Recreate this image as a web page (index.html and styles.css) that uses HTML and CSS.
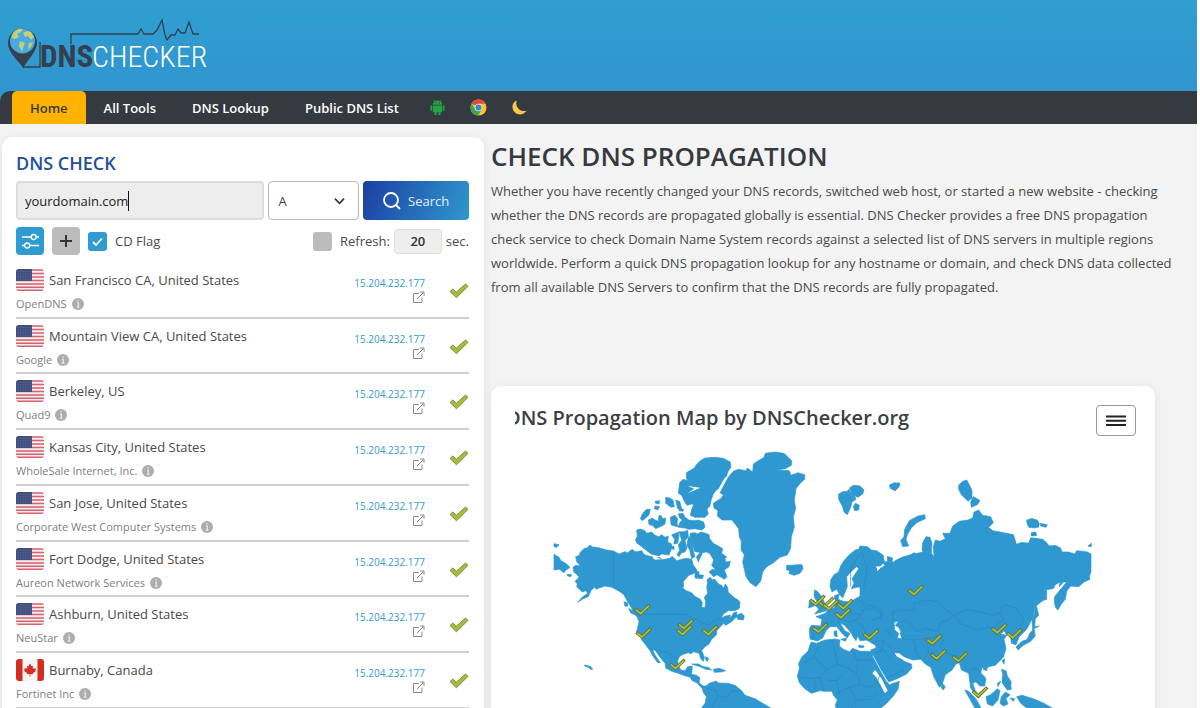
FILE: index.html
```html
<!DOCTYPE html>
<html lang="en">
<head>
<meta charset="utf-8">
<title>DNS Checker - DNS Check Propagation Tool</title>
<link rel="stylesheet" href="styles.css">
</head>
<body>
<svg class="defs" aria-hidden="true">
  <symbol id="us" viewBox="0 0 28 22">
    <rect width="28" height="22" fill="#f3eef0"/>
    <path d="M0 1H28M0 4.5H28M0 8H28M0 11.5H28M0 15H28M0 18.2H28M0 21.3H28" stroke="#d9606c" stroke-width="1.6"/>
    <rect width="16" height="12" fill="#41507f"/>
    <path d="M1.500 2.500H15M1.500 5H15M1.500 7.500H15M1.500 10H15" stroke="#6d79a3" stroke-width=".7" stroke-dasharray="1 1.500"/>
  </symbol>
  <symbol id="ca" viewBox="0 0 28 22">
    <rect width="28" height="22" fill="#f8f5f4"/>
    <path d="M0 0H6.500V22H0ZM21.500 0H28V22H21.500Z" fill="#d62b1f"/>
    <path d="M14 4.500L15.600 7.300L17 6.700L16.600 10L18 8.800L18.500 9.800L20 9.600L19.300 11.300L20 11.900L16.800 14.200L17 15.300L14.400 15V17.500H13.600V15L11 15.300L11.200 14.200L8 11.900L8.700 11.300L8 9.600L9.500 9.800L10 8.800L11.400 10L11 6.700L12.400 7.300Z" fill="#d62b1f"/>
  </symbol>
  <symbol id="info" viewBox="0 0 12 12">
    <circle cx="6" cy="6" r="6" fill="#adadad"/>
    <path d="M6 2.200V3.600M5 5H6.300V9M4.800 9.200H7.400" stroke="#eee" stroke-width="1.200" fill="none"/>
  </symbol>
  <symbol id="ext" viewBox="0 0 13 13">
    <path d="M7 2.500H1.500V11.500H10V6.500M5 8L11.500 1.500M8.200 1H12V4.800" fill="none" stroke="#8a8a8a" stroke-width="1"/>
  </symbol>
  <symbol id="ok" viewBox="0 0 20 16">
    <path d="M1 8.500L3.800 6L7.300 9.200L16.500 1L19 3.300L7.500 14.800Z" fill="#9fbf3b" stroke="#7c8f45" stroke-width="1" stroke-linejoin="round"/>
  </symbol>
  <g id="pin">
    <path d="M-17 -15L0 -1L27 -27" fill="none" stroke="#66702f" stroke-width="10"/>
    <path d="M-15 -13L0 -1L25 -25" fill="none" stroke="#abc53a" stroke-width="5"/>
  </g>
</svg>

<header class="top">
  <a class="logo" href="#" aria-label="DNS Checker">
    <svg viewBox="0 0 204 56" role="img">
      <path d="M1 27A14.500 14.500 0 0 1 30 27C30 35 20 45 16 52C12 45 1 37 1 27Z" fill="#34404d"/>
      <circle cx="15.500" cy="25" r="12.500" fill="#49abe0"/>
      <path d="M5 19C8 13 13 12 16 13L14 16L10 18L12 21L8 23L5 22ZM16 17L20 15L24 16L27 21L24 24L21 20L18 21ZM13 25L18 27L16 32L15 36L12 30ZM22 27L26 26L24 31L21 33Z" fill="#c6cf72"/>
      <path d="M16 51H33V26M64 28V18H131L134 13L137 18H146L150 14L155 4L158 19L160 24L164 19H168L171 13L174 17H178L182 6L186 18H192" fill="none" stroke="#34404d" stroke-width="1.300"/>
      <text class="logo-dns" x="33" y="51">DNS</text>
      <text class="logo-checker" x="85" y="51">CHECKER</text>
    </svg>
  </a>
</header>

<nav class="nav">
  <a class="active" href="#">Home</a>
  <a href="#">All Tools</a>
  <a href="#">DNS Lookup</a>
  <a href="#">Public DNS List</a>
  <a class="ico" href="#" aria-label="Android app"><svg viewBox="0 0 18 18"><path d="M4 6A5 4.500 0 0 1 14 6ZM4 7H14V14H12.200V17H10V14H8V17H5.800V14H4ZM1.500 7H3.300V12.500H1.500ZM14.700 7H16.500V12.500H14.700Z" fill="#24a344"/><path d="M5 1L6.500 3M13 1L11.500 3" stroke="#24a344"/><path d="M6.500 4H7.500M10.500 4H11.500" stroke="#343a40"/></svg></a>
  <a class="ico" href="#" aria-label="Chrome extension"><svg viewBox="0 0 18 18"><circle cx="9" cy="9" r="8.500" fill="#fbc52d"/><path d="M9 9L1.600 4.700A8.500 8.500 0 0 1 16.400 5H9Z" fill="#e34b35"/><path d="M1.600 4.700A8.500 8.500 0 0 0 8.600 17.500L12.500 11L9 9L5.500 11Z" fill="#3aa556"/><circle cx="9" cy="9" r="4" fill="#f2e9d8"/><circle cx="9" cy="9" r="3.200" fill="#3486dc"/></svg></a>
  <a class="ico" href="#" aria-label="Dark mode"><svg viewBox="0 0 18 18"><path d="M6 1.500C4 8 9 14 16.500 12.500C13 17.500 7 17.500 3.500 13.500C0 9 1.500 3.500 6 1.500Z" fill="#fcca46"/></svg></a>
</nav>

<main class="main">
  <section class="card check">
    <h2 class="check-title">DNS CHECK</h2>
    <form class="search">
      <div class="field"><input type="text" aria-label="Domain" value="yourdomain.com"><span class="sizer" aria-hidden="true">yourdomain.com</span></div>
      <select aria-label="Record type"><option>A</option></select>
      <button class="go" type="button"><svg viewBox="0 0 18 18"><circle cx="8" cy="8" r="7" fill="none" stroke="#fff" stroke-width="1.800"/><path d="M13 13L17 17" stroke="#fff" stroke-width="1.800"/></svg>Search</button>
    </form>
    <div class="options">
      <button class="sq blue" type="button" aria-label="Settings"><svg viewBox="0 0 28 28"><path d="M6 10H15M20.500 10H23M6 18.500H8.500M14 18.500H23" stroke="#fff" stroke-width="1.300"/><circle cx="17.700" cy="10" r="2.500" fill="none" stroke="#fff" stroke-width="1.300"/><circle cx="11.200" cy="18.500" r="2.500" fill="none" stroke="#fff" stroke-width="1.300"/></svg></button>
      <button class="sq grey" type="button" aria-label="Add server"><svg viewBox="0 0 28 28"><path d="M8 14H20M14 8V20" stroke="#333" stroke-width="2"/></svg></button>
      <label class="tick cd"><input type="checkbox" checked>CD Flag</label>
      <label class="tick refresh"><input type="checkbox">Refresh:</label>
      <input class="secs" type="text" aria-label="Refresh seconds" value="20">
      <span>sec.</span>
    </div>
    <table class="servers">
      <tbody>
        <tr><td><div class="city"><svg class="flag"><use href="#us"/></svg>San Francisco CA, United States</div><div class="isp">OpenDNS<svg><use href="#info"/></svg></div></td><td class="ip"><a href="#">15.204.232.177</a><svg><use href="#ext"/></svg></td><td class="ok"><svg><use href="#ok"/></svg></td></tr>
        <tr><td><div class="city"><svg class="flag"><use href="#us"/></svg>Mountain View CA, United States</div><div class="isp">Google<svg><use href="#info"/></svg></div></td><td class="ip"><a href="#">15.204.232.177</a><svg><use href="#ext"/></svg></td><td class="ok"><svg><use href="#ok"/></svg></td></tr>
        <tr><td><div class="city"><svg class="flag"><use href="#us"/></svg>Berkeley, US</div><div class="isp">Quad9<svg><use href="#info"/></svg></div></td><td class="ip"><a href="#">15.204.232.177</a><svg><use href="#ext"/></svg></td><td class="ok"><svg><use href="#ok"/></svg></td></tr>
        <tr><td><div class="city"><svg class="flag"><use href="#us"/></svg>Kansas City, United States</div><div class="isp">WholeSale Internet, Inc.<svg><use href="#info"/></svg></div></td><td class="ip"><a href="#">15.204.232.177</a><svg><use href="#ext"/></svg></td><td class="ok"><svg><use href="#ok"/></svg></td></tr>
        <tr><td><div class="city"><svg class="flag"><use href="#us"/></svg>San Jose, United States</div><div class="isp">Corporate West Computer Systems<svg><use href="#info"/></svg></div></td><td class="ip"><a href="#">15.204.232.177</a><svg><use href="#ext"/></svg></td><td class="ok"><svg><use href="#ok"/></svg></td></tr>
        <tr><td><div class="city"><svg class="flag"><use href="#us"/></svg>Fort Dodge, United States</div><div class="isp">Aureon Network Services<svg><use href="#info"/></svg></div></td><td class="ip"><a href="#">15.204.232.177</a><svg><use href="#ext"/></svg></td><td class="ok"><svg><use href="#ok"/></svg></td></tr>
        <tr><td><div class="city"><svg class="flag"><use href="#us"/></svg>Ashburn, United States</div><div class="isp">NeuStar<svg><use href="#info"/></svg></div></td><td class="ip"><a href="#">15.204.232.177</a><svg><use href="#ext"/></svg></td><td class="ok"><svg><use href="#ok"/></svg></td></tr>
        <tr><td><div class="city"><svg class="flag"><use href="#ca"/></svg>Burnaby, Canada</div><div class="isp">Fortinet Inc<svg><use href="#info"/></svg></div></td><td class="ip"><a href="#">15.204.232.177</a><svg><use href="#ext"/></svg></td><td class="ok"><svg><use href="#ok"/></svg></td></tr>
      </tbody>
    </table>
  </section>

  <section class="about">
    <h1>CHECK DNS PROPAGATION</h1>
    <p>Whether you have recently changed your DNS records, switched web host, or started a new website - checking<br>whether the DNS records are propagated globally is essential. DNS Checker provides a free DNS propagation<br>check service to check Domain Name System records against a selected list of DNS servers in multiple regions<br>worldwide. Perform a quick DNS propagation lookup for any hostname or domain, and check DNS data collected<br>from all available DNS Servers to confirm that the DNS records are fully propagated.</p>
    <div class="card map">
      <div class="map-head">
        <h2>DNS Propagation Map by DNSChecker.org</h2>
        <button type="button" aria-label="Map menu"><svg viewBox="0 0 20 12"><path d="M0 1.500H20M0 5.700H20M0 9.900H20" stroke="#222" stroke-width="2"/></svg></button>
      </div>
      <svg class="world" viewBox="-90 0 1848 840" role="img" aria-label="World map of DNS servers">
        <g class="land">
          <!-- North America -->
          <path d="M92 350L103 346L105 338L118 325L126 324L135 315L143 321L160 323L185 330L206 333L222 342L240 335L248 338L262 328L268 334L275 335L290 332L296 341L300 345L322 350L326 357L345 352L352 359L375 355L381 349L395 362L410 358L425 355L440 358L445 375L450 382L456 390L448 400L432 406L425 413L415 425L416 438L413 444L424 452L440 458L448 468L466 478L472 488L470 502L480 503L482 485L478 472L488 460L485 440L488 430L486 420L495 412L503 419L510 418L520 432L530 436L535 445L541 432L547 440L550 457L570 475L580 480L585 487L583 505L570 512L550 512L535 522L529 534L542 528L556 525L552 535L562 526L566 518L576 516L574 526L590 520L598 528L595 540L578 538L575 530L560 545L542 556L535 550L525 562L515 572L514 585L500 598L492 612L478 622L470 632L478 650L476 664L468 658L462 640L445 635L438 642L430 638L415 643L405 648L398 660L400 678L408 690L420 692L428 680L442 678L440 703L455 706L465 714L462 728L475 738L490 738L484 746L470 744L455 728L442 722L435 712L415 706L400 700L380 694L362 684L360 670L345 652L330 630L322 628L330 645L346 668L338 668L325 650L315 632L300 612L290 600L287 588L275 575L282 545L276 530L265 520L260 505L245 480L235 462L220 452L200 442L180 438L160 445L154 448L148 442L138 452L130 470L115 476L98 487L112 471L128 460L122 452L112 456L95 440L97 432L90 424L102 412L95 403L86 395L84 382L92 376L106 378L95 365Z"/>
          <path d="M27 343L42 352L48 362L62 370L75 382L64 390L56 398L44 388L27 390ZM27 311L42 314L36 322L27 320ZM66 403L80 404L77 410L68 408ZM237 485L247 488L249 498L240 499ZM251 505L262 512L270 524L258 520ZM118 675L136 679L143 688L136 688L130 682L120 679Z"/>
          <path d="M275 270L285 267L300 272L305 280L320 276L330 286L342 290L350 284L360 292L370 288L368 306L380 312L378 330L372 345L350 342L342 348L318 342L303 330L290 320L274 308L272 298L277 288ZM380 285L400 276L402 288L398 310L386 312L389 298ZM402 275L418 275L428 270L430 290L420 302L426 324L420 336L410 338L402 350L396 344L404 330L400 315L410 300ZM375 320L386 318L388 328L378 326Z"/>
          <path d="M436 280L450 278L457 282L468 276L482 280L492 284L494 296L505 310L520 318L533 326L530 340L544 350L540 366L556 364L552 380L538 390L546 410L538 418L516 404L506 410L492 396L502 388L512 390L500 376L506 360L494 340L484 336L472 338L470 360L460 366L454 350L466 338L448 334L444 318L432 306ZM450 390L462 396L462 404L476 406L472 416L450 414ZM430 290L442 310L444 330L450 350L440 356L434 330L426 316Z"/>
          <path d="M286 236L292 222L304 208L316 208L312 224L302 234L292 242ZM310 240L322 234L330 240L340 244L342 226L350 228L352 236L362 234L360 252L350 258L332 266L322 256L312 254ZM376 232L390 226L398 236L396 250L400 260L388 258L378 254ZM400 222L414 220L420 232L432 240L446 242L460 240L476 246L480 262L470 270L450 266L432 268L420 264L400 262L404 248L412 240L404 234ZM330 184L344 182L342 192L332 190ZM330 198L344 200L338 210L328 206ZM362 172L374 174L384 180L388 200L378 202L362 190ZM392 180L404 184L410 206L398 206ZM402 206L416 208L414 214L402 212Z"/>
          <path d="M466 62L480 54L510 52L535 55L556 66L558 82L548 96L545 108L538 114L530 128L520 146L512 152L504 164L498 182L494 200L486 206L490 222L480 232L450 232L436 226L440 208L446 194L440 192L426 196L418 184L410 166L400 160L404 128L414 118L428 122L430 132L424 112L424 98L448 84L454 74Z"/>
          <path d="M440 672L460 672L475 680L490 682L500 690L482 688L465 680ZM505 688L522 685L542 692L528 696L508 697ZM482 650L491 655L487 665L481 657Z"/>
          <path d="M472 741L484 738L492 730L514 723L520 729L550 730L572 737L590 752L600 766L630 776L680 806L700 850H480L476 820L469 805L480 790L484 770L474 756Z"/>
          <!-- Greenland, Iceland, Svalbard -->
          <path transform="translate(495)" d="M10 190L25 180L32 176L40 165L30 158L45 130L56 110L70 94L85 88L108 92L112 84L128 96L130 72L145 62L162 52L166 40L195 36L222 40L245 62L244 76L226 86L200 90L238 92L243 106L264 98L284 104L284 118L272 128L258 146L253 180L257 206L250 230L253 262L244 290L242 325L232 345L210 352L188 370L170 380L158 396L152 424L138 440L120 428L108 410L98 366L103 344L93 330L94 304L88 292L86 266L66 240L36 240L22 228L24 212L12 204ZM230 376L244 376L262 374L276 374L279 386L270 400L252 406L236 400L240 392L230 390ZM386 162L398 155L412 154L416 148L426 162L434 168L438 178L426 186L422 202L412 224L402 216L398 200L392 190L386 178ZM418 144L430 136L450 138L462 150L458 162L444 172L428 164ZM430 200L436 190L448 196L446 210L434 212ZM540 134L556 132L568 128L570 136L560 144L554 152L546 142Z"/>
          <!-- Europe and western Russia -->
          <path transform="translate(495)" d="M362 420L372 404L386 396L392 378L402 362L418 344L436 330L446 328L450 318L472 320L484 330L500 332L520 346L522 364L512 376L496 378L502 396L512 384L524 378L520 368L536 362L532 350L544 354L548 370L556 362L580 350L600 346L660 330V620H560L565 600L577 596L570 580L578 574L562 552L570 544L562 540L552 548L554 570L566 580L560 600L545 602L536 640L470 600L450 602L443 588L438 602L430 592L424 580L404 556L390 548L404 572L420 580L412 594L398 582L380 560L360 560L348 572L338 594L322 603L300 597L298 566L304 556L332 558L336 538L318 530L346 520L356 508L372 504L378 490L372 468L388 462L384 478L400 484L420 486L440 474L452 468L466 462V440L440 442L424 446L432 430L426 416L446 386L440 380L426 392L410 410L412 440L404 460L398 474L388 462L380 448L366 456L360 440Z"/>
          <path transform="translate(495)" d="M312 465L314 450L322 454L328 462L336 470L344 490L352 502L350 512L314 522L326 508L318 498L324 486L316 478ZM298 484L312 480L312 498L296 504ZM372 574L380 572L382 590L373 588ZM392 598L410 594L406 604ZM446 616L462 618L460 623L446 622Z"/>
          <!-- Africa -->
          <path transform="translate(495)" d="M304 606L320 610L345 600L376 597L390 600L388 618L400 628L418 635L428 625L450 634L475 634L490 636L488 650L500 672L515 700L528 722L538 734L568 724L564 748L550 768L530 790L500 815V850H380L382 820L376 795L382 780L370 765L366 754L345 754L330 752L304 760L284 746L268 728L262 708L268 686L266 670L276 650L294 634L300 614Z"/>
          <!-- Middle East and Asia -->
          <path transform="translate(945)" d="M0 320L22 322L42 338L66 348L74 366L60 378L46 378L52 396L66 384L84 374L82 350L98 354L94 370L108 362L120 356L148 346L162 338L180 348L194 354L200 348L186 330L188 308L198 290L210 292L216 310L214 340L222 350L216 374L222 352L220 320L226 300L240 304L256 296L248 280L270 280L278 258L298 244L324 240L338 234L342 216L356 210L368 226L392 230L400 248L386 262L398 272L420 276L460 284L470 314L486 308L506 310L512 294L550 298V480L526 500L498 486L524 452L560 450V478L524 490L520 530L500 568L478 590L468 614L454 610L452 588L438 582L432 572L422 582L440 586L432 598L438 626L430 652L406 676L386 680L374 690L366 682L362 700L378 716L374 738L360 738L348 726L338 730L346 752L360 770L354 774L332 744L326 700L304 690L298 668L288 672L276 690L256 704L246 734L238 742L222 712L212 682L196 672L182 658L160 660L132 652L112 642L132 664L154 672L156 684L140 702L112 716L86 726L66 694L42 650L32 630L48 624L46 602L20 600L-6 582V560H12L20 548L40 546L50 558L68 564L74 574L60 580L80 584L104 590L112 594L126 596L122 574L116 562L106 556L116 544L100 546L80 530L0 520Z"/>
          <path transform="translate(945)" d="M122 302L132 290L134 268L148 242L174 228L194 224L196 236L170 248L154 264L142 284L138 298L146 318L128 320ZM88 136L102 128L118 130L116 142L106 152L92 146ZM296 136L308 124L320 120L328 134L336 152L336 174L324 184L304 164L296 148ZM340 170L348 174L360 182L352 194L334 202L332 186ZM500 240L518 236L536 246L536 262L516 260L504 256ZM514 278L526 276L526 288L514 286ZM246 730L256 740L250 750L244 744ZM314 750L326 754L346 774L360 798L370 830L350 815L330 778ZM378 770L392 764L412 746L420 752L414 780L398 798L382 792ZM424 770L436 756L450 764L438 776L444 792L430 798L420 790ZM424 688L438 692L442 708L454 726L450 744L438 742L426 728L432 712ZM412 730L422 724L414 740ZM426 662L434 656L432 672ZM370 688L382 682L380 692ZM470 770L486 766L520 776L552 790L580 806L540 816L500 804L482 790ZM450 774L464 776L460 784ZM376 815L430 812L426 818L380 820Z"/>
          <!-- Eastern Siberia, Kamchatka, Japan -->
          <path transform="translate(1365 -180)" d="M0 468L16 462L38 464L48 494L62 488L90 490L92 474L110 476L136 484L148 498L166 496L182 504L186 516L206 516L224 522L230 512L248 514L262 516L273 522V574L268 590L270 598L252 606L236 620L212 618L200 634L196 658L184 672L174 690L166 682L163 664L164 650L180 630L200 606L190 606L178 620L180 606L166 614L160 626L130 630L102 636L80 660L100 668L100 700L90 720L60 752L0 742ZM80 424L92 416L112 420L118 434L106 444L86 442ZM120 430L142 434L138 442L122 438ZM96 460L108 458L110 466L94 468ZM264 498L274 490V500ZM102 670L110 680L116 706L106 716L104 740L118 738L102 746L106 768L92 784L70 796L54 810L48 800L66 784L82 778L88 762L98 750L96 720L104 700ZM10 875L16 874L18 886L30 904L34 928L22 930L12 916L6 900Z"/>
        </g>
        <!-- lakes and inland seas -->
        <path class="water" d="M472 342L482 338L488 350L500 354L502 370L488 376L478 368L470 376L462 362ZM540 356L548 352L550 366ZM322 352L355 357L330 359ZM428 160L466 143L428 138L448 146ZM982 700L994 712L1020 760L1028 752L1010 716L990 690ZM1049 638L1056 650L1082 662L1096 660L1078 652L1062 640Z"/>
        <!-- country borders -->
        <g class="borders">
          <path d="M206 333V438L238 462M280 523H420L450 536L466 545L490 556L512 540L528 536M318 628L345 632L366 636L386 650L400 660M484 746L510 750L520 768L548 772L560 752L590 756M520 768L500 806"/>
          <path transform="translate(495)" d="M422 440V386L444 350L458 338M458 338L470 392L462 440M440 474L460 490L490 500L508 506L518 520L506 534L484 542M400 510L430 520L452 524L440 540L420 546L400 540M452 524L470 500M360 512L390 530L382 552M310 558L308 600M440 548L460 560L468 580M324 620L312 650L276 672M312 650L350 690L382 672L376 640L366 600M382 672L400 678L440 700L444 668L428 632M444 660H490M440 700L450 734L480 742L500 730L510 704M350 690L330 712L296 716L268 712M330 712L342 754M350 720L380 722L400 700M380 722L386 758L420 742L450 734M420 742L440 780L480 778L500 760M440 780L420 804M316 716L314 756M500 640L520 630L540 654"/>
          <path transform="translate(945)" d="M100 546L98 516L130 512L164 510L162 490L200 480L236 486L260 512L282 526L262 540L240 548L234 576L200 566L170 574L140 540L120 548M282 526L320 508L360 516L400 526L420 518L432 494L466 504L490 534L482 560M282 526L300 550L350 570L400 560L430 540L420 518M234 576L250 600L240 622L262 640L298 652L310 656L320 690M126 596L160 600L170 640L182 656M160 600L200 596L232 588M200 596L206 640L190 656M46 604L70 602L92 624L112 640M70 602L64 632L44 640M86 712L110 700L132 690M0 510L40 506L66 520L62 540M330 690L350 684L376 712M76 570L100 590"/>
        </g>
        <use href="#pin" x="287" y="522"/><use href="#pin" x="291" y="592"/><use href="#pin" x="413" y="584"/><use href="#pin" x="417" y="566"/><use href="#pin" x="490" y="584"/><use href="#pin" x="392" y="686"/>
        <use href="#pin" x="838" y="500"/><use href="#pin" x="852" y="508"/><use href="#pin" x="812" y="494"/><use href="#pin" x="895" y="506"/><use href="#pin" x="888" y="534"/><use href="#pin" x="820" y="577"/><use href="#pin" x="973" y="596"/>
        <use href="#pin" x="1107" y="464"/><use href="#pin" x="1162" y="612"/><use href="#pin" x="1175" y="657"/><use href="#pin" x="1240" y="664"/><use href="#pin" x="1357" y="579"/><use href="#pin" x="1403" y="594"/><use href="#pin" x="1300" y="769"/>
      </svg>
    </div>
  </section>
</main>
</body>
</html>
```
FILE: styles.css
```css
* { box-sizing: border-box; }

body {
  margin: 0;
  height: 100vh;
  overflow: hidden;
  border-right: 3px solid #fff;
  background: #f3f3f3;
  color: #4a4a4a;
  font: 13px/20px "Open Sans", "Noto Sans", sans-serif;
}

h1, h2, p { margin: 0; }
a { text-decoration: none; }
button, input, select { font: inherit; }
.defs { position: absolute; width: 0; height: 0; }

.top {
  height: 91px;
  padding: 16px 7px 0;
  background: linear-gradient(#309fd0, #3095d0);
}
.logo { display: block; width: 204px; }
.logo svg { display: block; width: 100%; }
.logo-dns {
  font: bold 31px "Roboto Condensed", "Liberation Sans Narrow", "DejaVu Sans Condensed", sans-serif;
  fill: #34404d;
}
.logo-checker {
  font: 300 30px "Roboto Condensed", "Liberation Sans Narrow", "DejaVu Sans Condensed", sans-serif;
  fill: #fff;
}

.nav {
  display: flex;
  height: 33px;
  padding-left: 12px;
  background: #343a40;
  border-radius: 10px 0 0 0;
  box-shadow: -10px -10px 0 -1px #3095d0;
}
.nav a {
  display: flex;
  align-items: center;
  padding: 0 18px;
  color: #fff;
  font-weight: 600;
}
.nav .active {
  background: #ffb300;
  color: #343a40;
  border-radius: 5px 5px 0 0;
}
.nav .ico { padding: 0 12px; }
.nav svg { width: 17px; height: 17px; }

.main {
  display: grid;
  grid-template-columns: minmax(0, 482fr) minmax(0, 664fr);
  align-items: start;
  gap: 7px;
  padding: 13px 42px 0 2px;
}
.card {
  background: #fff;
  border-radius: 10px;
  box-shadow: 0 2px 10px rgba(0, 0, 0, .08);
}

.check { padding: 12px 15px 20px 14px; }
.check-title {
  color: #24509a;
  font-size: 18px;
  font-weight: 600;
  line-height: 28px;
}
.search {
  display: grid;
  grid-template-columns: 249fr 91fr 106fr;
  gap: 4px;
  margin-top: 4px;
}
.search input, .search select, .go { width: 100%; height: 39px; }
.field { position: relative; }
.field input {
  padding: 0 7px;
  color: #222;
  background: #ededed;
  border: 2px solid #ddd;
  border-radius: 4px;
}
.sizer {
  position: absolute;
  left: 9px;
  top: 10px;
  color: transparent;
  border-right: 1px solid #111;
  pointer-events: none;
}
.search select {
  appearance: none;
  padding: 0 9px;
  color: #444;
  background: #fff url("data:image/svg+xml,%3Csvg xmlns='http://www.w3.org/2000/svg' viewBox='0 0 12 8'%3E%3Cpath d='M1 1.500L6 6.500L11 1.500' fill='none' stroke='%23333' stroke-width='1.800'/%3E%3C/svg%3E") no-repeat right 13px center / 11px 8px;
  border: 1px solid #b5b5b5;
  border-radius: 4px;
}
.go {
  display: flex;
  align-items: center;
  justify-content: center;
  gap: 7px;
  color: #e4eefb;
  background: linear-gradient(110deg, #1c3fa3, #2f97cd);
  border: 0;
  border-radius: 4px;
}
.go svg { width: 18px; height: 18px; }

.options {
  display: flex;
  align-items: center;
  height: 30px;
  margin-top: 6px;
}
.sq {
  width: 28px;
  height: 28px;
  margin-right: 8px;
  padding: 0;
  border: 0;
  border-radius: 4px;
}
.sq svg { display: block; width: 28px; height: 28px; }
.blue { background: #2f9bd0; }
.grey { background: #bcbcbc; }
.tick { display: flex; align-items: center; gap: 8px; }
.tick input {
  appearance: none;
  width: 19px;
  height: 19px;
  margin: 0;
  background: #bcbcbc;
  border-radius: 3px;
}
.tick input:checked {
  background: #2f9bd0 url("data:image/svg+xml,%3Csvg xmlns='http://www.w3.org/2000/svg' viewBox='0 0 19 19'%3E%3Cpath d='M5 10L8 13L14 6.500' fill='none' stroke='%23fff' stroke-width='1.800'/%3E%3C/svg%3E");
}
.refresh { margin-left: auto; }
.secs {
  width: 48px;
  height: 25px;
  margin: 0 4px;
  padding: 0;
  text-align: center;
  color: #333;
  font-weight: 600;
  background: #eee;
  border: 1px solid #ddd;
  border-radius: 4px;
}

.servers {
  width: 100%;
  height: 446px;
  margin-top: 7px;
  border-collapse: collapse;
}
.servers td {
  padding: 4px 0 0;
  vertical-align: top;
  border-bottom: 2px solid #d0d0d0;
}
.city { display: flex; align-items: center; gap: 5px; height: 26px; }
.flag { width: 28px; height: 22px; border-radius: 3px; }
.isp {
  display: flex;
  align-items: center;
  gap: 5px;
  height: 22px;
  color: #808080;
  font-size: 11px;
}
.isp svg { width: 12px; height: 12px; }
.servers .ip {
  width: 70px;
  padding-top: 12px;
  font-size: 10px;
  line-height: 16px;
  text-align: right;
}
.ip a { color: #2f9bd0; }
.ip svg { display: block; width: 13px; height: 13px; margin-left: auto; }
.servers .ok { width: 44px; padding-top: 20px; }
.ok svg { display: block; width: 20px; height: 16px; margin-left: auto; }

.about h1 {
  padding-top: 3px;
  color: #343a40;
  font-size: 26px;
  font-weight: 600;
  line-height: 32px;
}
.about p { margin-top: 7px; line-height: 24px; white-space: nowrap; }
.map { margin-top: 87px; padding: 16px 24px 0; }
.map-head { display: flex; justify-content: space-between; height: 38px; }
.map-head h2 {
  overflow: hidden;
  text-indent: -9px;
  color: #3c3f42;
  font-size: 20px;
  font-weight: 600;
  line-height: 32px;
}
.map-head button {
  display: grid;
  place-items: center;
  width: 40px;
  height: 31px;
  margin: 3px -5px 0 0;
  padding: 0;
  background: #fff;
  border: 1px solid #999;
  border-radius: 4px;
}
.map-head button svg { width: 20px; height: 12px; }
.world { display: block; width: 100%; }
.land { fill: #2f98d0; stroke: #2f98d0; stroke-width: 2; stroke-linejoin: round; }
.water { fill: #fff; }
.borders { fill: none; stroke: #2787bd; stroke-width: 2; stroke-linejoin: round; }
```
